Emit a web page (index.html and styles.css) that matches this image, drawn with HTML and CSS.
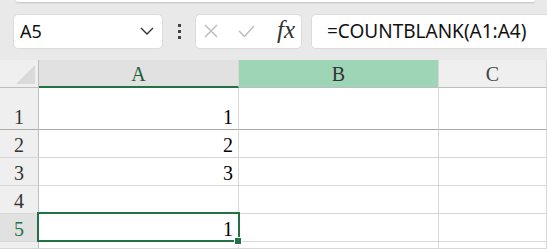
FILE: index.html
```html
<!DOCTYPE html>
<html lang="en">
<head>
  <meta charset="UTF-8" />
  <title>Sheet</title>
  <link rel="stylesheet" href="styles.css">
</head>
<body>
  <div class="ribbon-edge"></div>
  <div class="formula-bar">
    <div class="name-box">
      <span>A5</span>
      <svg class="chevron" width="14" height="8" viewBox="0 0 14 8"><path d="M1 1 L7 7 L13 1" fill="none" stroke="#333" stroke-width="1.4"/></svg>
    </div>
    <div class="grip"><i></i><i></i><i></i></div>
    <div class="fx-box">
      <svg width="14" height="14" viewBox="0 0 14 14"><path d="M1 1 L13 13 M13 1 L1 13" stroke="#bdbdbd" stroke-width="1.5"/></svg>
      <svg width="17" height="13" viewBox="0 0 17 13"><path d="M1 6 L6.5 11.5 L16 1" fill="none" stroke="#bdbdbd" stroke-width="1.5"/></svg>
      <span class="fx">fx</span>
    </div>
    <div class="formula">=COUNTBLANK(A1:A4)</div>
  </div>

  <div class="sheet">
    <div class="corner"><span class="tri"></span></div>
    <div class="col-head active">A</div>
    <div class="col-head hover">B</div>
    <div class="col-head">C</div>

    <div class="row-head">1</div>
    <div class="cell">1</div>
    <div class="cell"></div>
    <div class="cell"></div>

    <div class="row-head">2</div>
    <div class="cell">2</div>
    <div class="cell"></div>
    <div class="cell"></div>

    <div class="row-head">3</div>
    <div class="cell">3</div>
    <div class="cell"></div>
    <div class="cell"></div>

    <div class="row-head">4</div>
    <div class="cell"></div>
    <div class="cell"></div>
    <div class="cell"></div>

    <div class="row-head active">5</div>
    <div class="cell selected">1<span class="handle"></span></div>
    <div class="cell"></div>
    <div class="cell"></div>

    <div class="row-head"></div>
    <div class="cell"></div>
    <div class="cell"></div>
    <div class="cell"></div>
  </div>
</body>
</html>
```

FILE: styles.css
```css
html, body {
  width: 547px;
  height: 249px;
}
body {
  margin: 0;
  background: #e9e9e9;
  font-family: 'Noto Sans', 'Open Sans', sans-serif;
  color: #222;
  overflow: hidden;
}
.ribbon-edge {
  height: 2px;
  margin: 0 12px 0 16px;
  background: #fff;
  border-radius: 0 0 6px 6px;
  box-shadow: 0 1px 2px rgba(0, 0, 0, 0.18);
}
.formula-bar {
  display: flex;
  align-items: center;
  height: 58px;
  padding-left: 13px;
}
.name-box,
.fx-box,
.formula {
  height: 35px;
  box-sizing: border-box;
  background: #fff;
  border: 1px solid #dcdcdc;
  border-radius: 5px;
  display: flex;
  align-items: center;
}
.name-box {
  width: 150px;
  padding: 0 8px 0 6px;
  justify-content: space-between;
  font-size: 18px;
  color: #111;
}
.grip {
  width: 32px;
  display: flex;
  flex-direction: column;
  align-items: center;
  gap: 3px;
}
.grip i {
  width: 3px;
  height: 3px;
  background: #444;
}
.fx-box {
  width: 107px;
  padding: 0 0 0 8px;
  gap: 0;
}
.fx-box svg:first-child {
  margin-right: 20px;
}
.fx {
  font-family: 'Liberation Serif', serif;
  font-style: italic;
  font-size: 25px;
  color: #333;
  margin-left: 22px;
  margin-top: -3px;
}
.formula {
  flex: 1;
  margin-left: 9px;
  padding-left: 15px;
  font-size: 19px;
  color: #111;
  border-right: none;
  border-radius: 5px 0 0 5px;
}
.sheet {
  display: grid;
  grid-template-columns: 39px 200px 200px 108px;
  grid-template-rows: 28px 42px 28px 28px 28px 28px 7px;
  font-family: 'Liberation Serif', serif;
  font-size: 20px;
  background: #fff;
  overflow: hidden;
}
.sheet > div {
  box-sizing: border-box;
  border-right: 1px solid #d8d8d8;
  border-bottom: 1px solid #d8d8d8;
}
.corner {
  background: #efefef;
  position: relative;
  border-right-color: #bdbdbd !important;
  border-bottom-color: #bdbdbd !important;
}
.tri {
  position: absolute;
  right: 3px;
  bottom: 3px;
  width: 0;
  height: 0;
  border-left: 19px solid transparent;
  border-bottom: 19px solid #dadada;
}
.col-head {
  background: #efefef;
  color: #444;
  text-align: center;
  line-height: 28px;
  border-bottom-color: #bdbdbd !important;
}
.col-head.active {
  background: #e1e1e1;
  color: #1f5e3c;
  border-bottom: 2px solid #217346 !important;
}
.col-head.hover {
  background: #9fd5b7;
  color: #333;
}
.row-head {
  background: #efefef;
  color: #333;
  text-align: center;
  display: flex;
  align-items: flex-end;
  justify-content: center;
  border-right-color: #bdbdbd !important;
}
.row-head.active {
  background: #e1e1e1;
  color: #217346;
}
.cell {
  display: flex;
  align-items: flex-end;
  justify-content: flex-end;
  padding: 0 5px 0 0;
  color: #000;
}
.sheet > div:nth-child(-n+8) {
  border-bottom-color: #ababab;
}
.selected {
  position: relative;
}
.selected::after {
  content: '';
  position: absolute;
  left: -2px;
  top: -2px;
  right: -2px;
  bottom: -1px;
  border: 2px solid #217346;
}
.handle {
  position: absolute;
  right: -4px;
  bottom: -4px;
  width: 6px;
  height: 6px;
  background: #217346;
  border: 1px solid #fff;
  z-index: 1;
}
```
